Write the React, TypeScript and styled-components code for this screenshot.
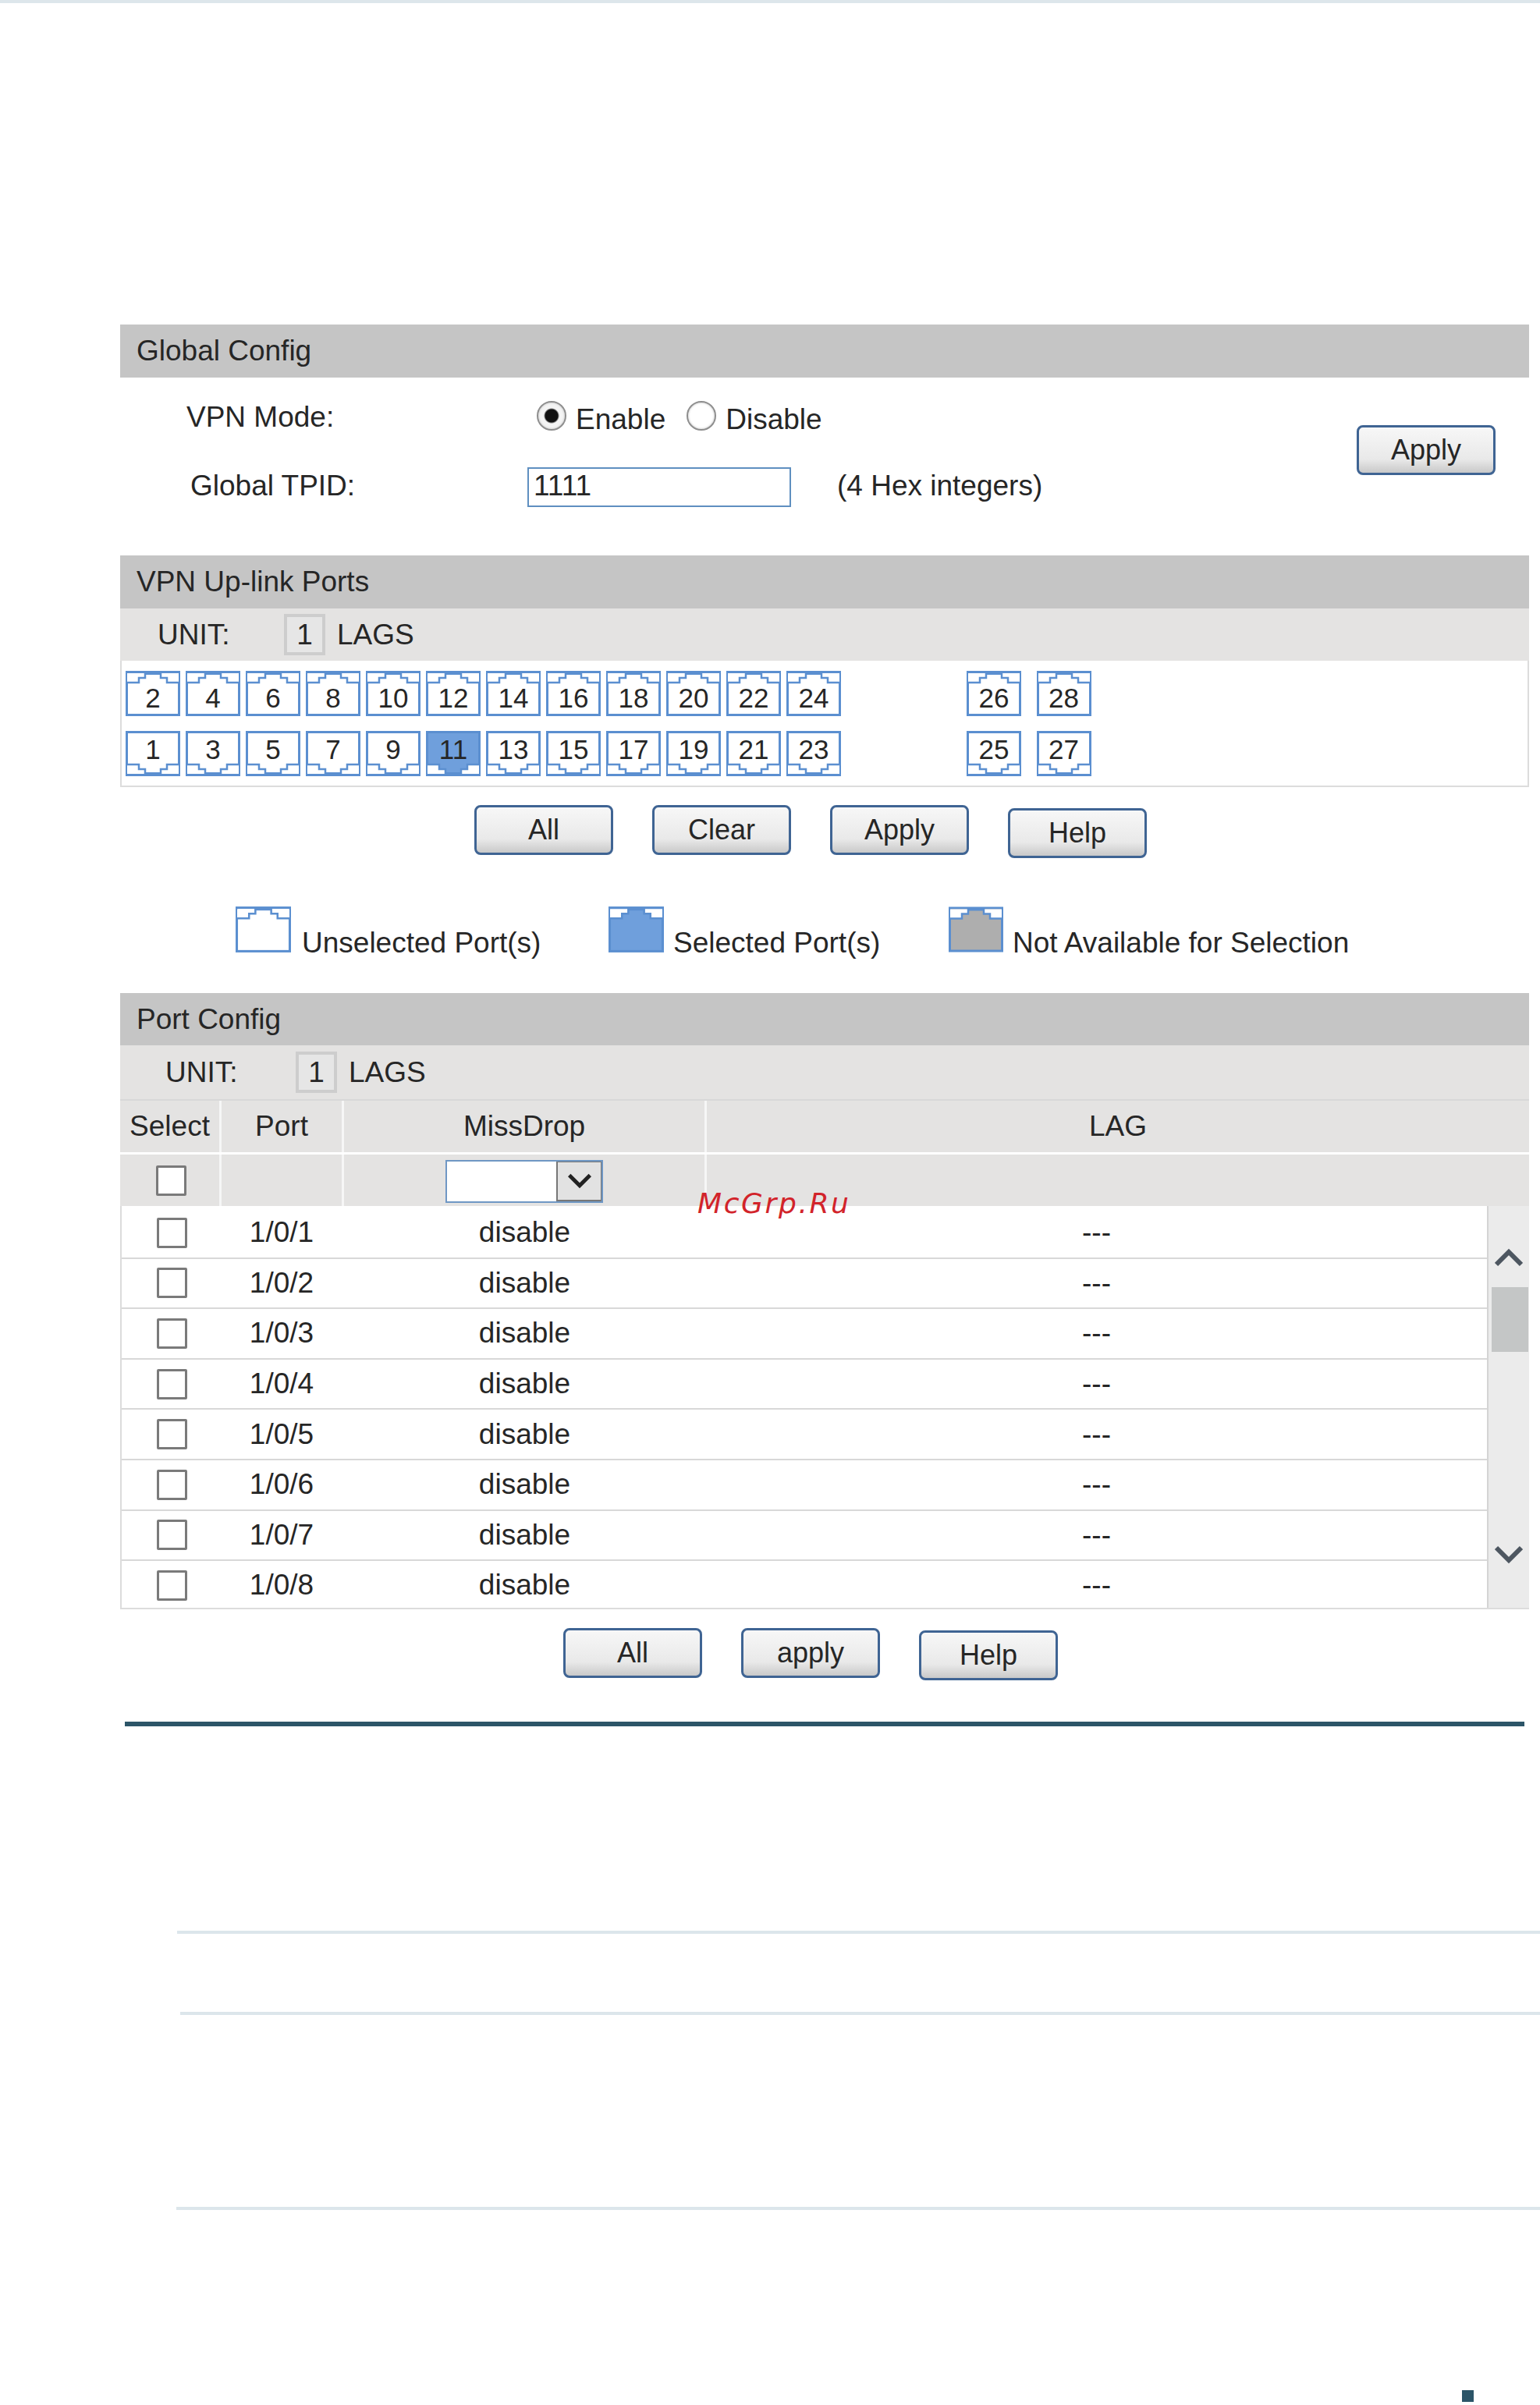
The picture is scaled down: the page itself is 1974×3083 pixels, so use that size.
import React from "react";
import styled, { createGlobalStyle } from "styled-components";

const FONT = `"Liberation Sans", Arial, sans-serif`;

const GlobalStyle = createGlobalStyle`
  html, body {
    margin: 0;
    padding: 0;
    background: #fff;
  }
  * {
    box-sizing: border-box;
  }
`;

const Page = styled("div")`
  position: relative;
  width: 1974px;
  height: 3083px;
  overflow: hidden;
  display: flex;
  flex-direction: column;
  padding-left: 154px;
  background: #fff;
  color: #262626;
  font-family: ${FONT};
  font-size: 37px;
  & > * {
    flex-shrink: 0;
  }
  &::before {
    content: "";
    display: block;
    height: 4px;
    margin-left: -154px;
    margin-bottom: 412px;
    background: #dde6eb;
  }
`;

const Watermark = styled("div")`
  position: absolute;
  left: 894px;
  top: 1521px;
  color: #d2232a;
  font-family: "DejaVu Sans", sans-serif;
  font-style: italic;
  font-size: 36px;
  letter-spacing: 2.6px;
  line-height: 44px;
`;

const Panel = styled("section")`
  width: 1806px;
`;

const TitleBar = styled("div")`
  height: ${(p: { $h?: number }) => p.$h ?? 68}px;
  padding-left: 21px;
  display: flex;
  align-items: center;
  background: #c5c5c5;
`;

const GlobalBody = styled("div")`
  height: 228px;
  display: flex;
  justify-content: space-between;
  align-items: flex-start;
  padding: 20px 43px 0 0;
`;

const FormRows = styled("div")`
  display: flex;
  flex-direction: column;
`;

const FormRow = styled("div")<{ $h: number; $mt?: number }>`
  height: ${(p) => p.$h}px;
  margin-top: ${(p) => p.$mt ?? 0}px;
  display: grid;
  grid-template-columns: 522px auto auto;
  align-items: center;
`;

const FormLabel = styled("span")<{ $left: number; $lift?: number }>`
  padding-left: ${(p) => p.$left}px;
  padding-bottom: ${(p) => p.$lift ?? 0}px;
`;

const RadioGroup = styled("div")`
  display: flex;
  align-items: center;
  padding-left: 12px;
`;

const Radio = styled("input")`
  appearance: none;
  width: 38px;
  height: 38px;
  margin: -4px 12px 0 0;
  border: 2px solid #8e8e8e;
  border-radius: 50%;
  background: #fff;
  box-shadow: inset 0 0 3px #bbb;
  &:checked {
    background: radial-gradient(circle, #111 0 8px, #f4f4f4 10px);
  }
`;

const RadioLabel = styled("span")<{ $mr?: number }>`
  margin-right: ${(p) => p.$mr ?? 0}px;
  padding-top: 6px;
`;

const TextInput = styled("input")`
  width: 338px;
  height: 51px;
  padding: 0 6px 3px;
  border: 2px solid #5f8fc0;
  background: #fff;
  color: #262626;
  font-family: ${FONT};
  font-size: 37px;
  outline: none;
`;

const Hint = styled("span")`
  margin-left: 59px;
  padding-bottom: 3px;
`;

const Button = styled("button")<{ $drop?: number }>`
  width: 178px;
  height: 64px;
  margin-top: ${(p) => p.$drop ?? 0}px;
  padding: 0;
  border: 3px solid #3f6493;
  border-radius: 8px;
  background: linear-gradient(#f7f7f7 0%, #e9e9e9 70%, #c9c9c9 100%);
  color: #262626;
  font-family: ${FONT};
  font-size: 36px;
`;

const TopApply = styled(Button)`
  margin-top: 41px;
`;

const UnitRow = styled("div")<{ $left: number; $h: number; $gap: number }>`
  height: ${(p) => p.$h}px;
  padding-left: ${(p) => p.$left}px;
  display: flex;
  align-items: center;
  background: #e4e3e2;
  & > span:first-child {
    width: ${(p) => p.$gap}px;
  }
`;

const UnitBox = styled("span")`
  width: 53px;
  height: 53px;
  margin-right: 15px;
  display: flex;
  align-items: center;
  justify-content: center;
  background: #e6e6e6;
  box-shadow: inset 0 0 0 4px #cdcdcd;
`;

const PortsArea = styled("div")`
  height: 162px;
  padding: 13px 0 0 5px;
  display: flex;
  flex-direction: column;
  gap: 19px;
  border: solid #dcdcdc;
  border-width: 0 2px 2px 2px;
`;

const PortRow = styled("div")`
  display: flex;
  gap: 7px;
`;

const ExtraPorts = styled("div")`
  display: flex;
  gap: 19.5px;
  margin-left: 154px;
`;

const PortCell = styled("div")`
  width: 70px;
  height: 58px;
  display: grid;
  font-size: 35px;
  & > * {
    grid-area: 1 / 1;
  }
`;

const PortNumber = styled("span")<{ $top: boolean }>`
  justify-self: center;
  align-self: center;
  line-height: 1;
  margin-top: ${(p) => (p.$top ? 10 : -12)}px;
`;

const ButtonRow = styled("div")<{ $left: number; $mt: number }>`
  display: flex;
  align-items: flex-start;
  gap: 50px;
  padding-left: ${(p) => p.$left}px;
  margin-top: ${(p) => p.$mt}px;
`;

const Legend = styled("div")`
  height: 111px;
  margin-top: 62px;
  padding-left: 148px;
  display: grid;
  grid-template-columns: 478px 436px 1fr;
`;

const LegendItem = styled("div")<{ $gap: number }>`
  display: flex;
  align-items: flex-start;
  gap: ${(p) => p.$gap}px;
  & > span {
    margin-top: 26px;
    line-height: 42px;
  }
`;

const TableHead = styled("div")<{ $h: number; $line?: boolean }>`
  height: ${(p) => p.$h}px;
  display: grid;
  grid-template-columns: 127px 157px 465px 1fr;
  background: #e4e3e2;
  border-top: ${(p) => (p.$line ? "3px solid #fff" : "2px solid #d8d8d8")};
`;

const HeadCell = styled("div")<{ $divider?: boolean }>`
  display: flex;
  align-items: center;
  justify-content: center;
  border-left: ${(p) => (p.$divider ? "3px solid #f6f6f6" : "none")};
`;

const TableBody = styled("div")`
  display: flex;
  height: 517px;
  border: solid #dcdcdc;
  border-width: 0 0 2px 2px;
`;

const Rows = styled("div")`
  flex: 1;
  padding-top: 3px;
`;

const Row = styled("div")`
  height: 64.6px;
  display: grid;
  grid-template-columns: 126px 158px 465px 1fr;
  border-bottom: 2px solid #d8d8d8;
  &:last-child {
    height: 62px;
    border-bottom: none;
  }
`;

const Cell = styled("div")`
  display: flex;
  align-items: center;
  justify-content: center;
`;

const Check = styled("input")`
  appearance: none;
  width: 39px;
  height: 39px;
  margin: 0 0 0 3px;
  border: 3px solid #7a7a7a;
  border-radius: 2px;
  background: #fff;
`;

const SelectBox = styled("div")`
  width: 202px;
  height: 55px;
  margin-top: 2px;
  display: flex;
  justify-content: flex-end;
  border: 2px solid #6f97c4;
  background: #fff;
`;

const SelectArrow = styled("div")`
  width: 58px;
  display: flex;
  align-items: center;
  justify-content: center;
  background: #e2e2e2;
  border: 1px solid #777;
  border-width: 1px 1px 2px 2px;
`;

const Scrollbar = styled("div")`
  width: 54px;
  flex-shrink: 0;
  display: flex;
  flex-direction: column;
  align-items: center;
  padding-top: 53px;
  background: #ebebeb;
  border-left: 2px solid #d4d4d4;
`;

const ScrollThumb = styled("div")`
  width: 47px;
  height: 83px;
  margin: 25px 0 247px 3px;
  background: #c4c6c6;
`;

const DarkLine = styled("div")`
  width: 1794px;
  height: 6px;
  margin: 53px 0 0 6px;
  background: #2c5568;
`;

const Rule = styled("div")<{ $left: number; $mt: number }>`
  height: 4px;
  margin-top: ${(p) => p.$mt}px;
  margin-left: ${(p) => p.$left}px;
  background: #dce6eb;
`;

const PageMark = styled("div")`
  width: 15px;
  height: 15px;
  margin: 231px 0 0 1720px;
  background: #2c5568;
`;

const BLUE = "#5b8fd0";

function PortShape({
  fill = "#fff",
  w = 70,
  h = 58,
  flip = false,
}: {
  fill?: string;
  w?: number;
  h?: number;
  flip?: boolean;
}) {
  // the jack: outer box, stepped line at the top, plug tab between the steps
  const notch = "M2 15H17V9H25V3H2Z M68 15H53V9H45V3H68Z";
  return (
    <svg width={w} height={h} viewBox="0 0 70 58">
      <g transform={flip ? "matrix(1 0 0 -1 0 58)" : undefined}>
        <rect x="1.5" y="1.5" width="67" height="55" fill={fill} stroke={BLUE} strokeWidth="3" />
        <path d={notch} fill="#fff" />
        <path
          d="M2 15H17V9H25V3H45V9H53V15H68"
          fill="none"
          stroke={BLUE}
          strokeWidth="2.5"
        />
        <rect x="25" y="2" width="20" height="3" fill={BLUE} />
      </g>
    </svg>
  );
}

function Port({ n }: { n: number }) {
  const top = n % 2 === 0;
  return (
    <PortCell>
      <PortShape flip={!top} fill={n === 11 ? "#6f9fdc" : "#fff"} />
      <PortNumber $top={top}>{n}</PortNumber>
    </PortCell>
  );
}

function Chevron({
  up = false,
  w = 36,
  h = 26,
  color = "#4d5660",
}: {
  up?: boolean;
  w?: number;
  h?: number;
  color?: string;
}) {
  return (
    <svg width={w} height={h} viewBox="0 0 36 26">
      <path
        d={up ? "M2 22L18 6L34 22" : "M2 4L18 20L34 4"}
        fill="none"
        stroke={color}
        strokeWidth={6}
      />
    </svg>
  );
}

const evenPorts = [2, 4, 6, 8, 10, 12, 14, 16, 18, 20, 22, 24];
const oddPorts = [1, 3, 5, 7, 9, 11, 13, 15, 17, 19, 21, 23];
const portRows = ["1/0/1", "1/0/2", "1/0/3", "1/0/4", "1/0/5", "1/0/6", "1/0/7", "1/0/8"];

export default function App() {
  return (
    <Page>
      <GlobalStyle />

      <Panel>
        <TitleBar>Global Config</TitleBar>
        <GlobalBody>
          <FormRows>
            <FormRow $h={62}>
              <FormLabel $left={85}>VPN Mode:</FormLabel>
              <RadioGroup>
                <Radio type="radio" name="vpn" defaultChecked />
                <RadioLabel $mr={27}>Enable</RadioLabel>
                <Radio type="radio" name="vpn" />
                <RadioLabel>Disable</RadioLabel>
              </RadioGroup>
            </FormRow>
            <FormRow $h={51} $mt={33}>
              <FormLabel $left={90} $lift={3}>Global TPID:</FormLabel>
              <TextInput defaultValue="1111" />
              <Hint>(4 Hex integers)</Hint>
            </FormRow>
          </FormRows>
          <TopApply>Apply</TopApply>
        </GlobalBody>
      </Panel>

      <Panel>
        <TitleBar>VPN Up-link Ports</TitleBar>
        <UnitRow $left={48} $h={67} $gap={162}>
          <span>UNIT:</span>
          <UnitBox>1</UnitBox>
          <span>LAGS</span>
        </UnitRow>
        <PortsArea>
          <PortRow>
            {evenPorts.map((n) => (
              <Port key={n} n={n} />
            ))}
            <ExtraPorts>
              <Port n={26} />
              <Port n={28} />
            </ExtraPorts>
          </PortRow>
          <PortRow>
            {oddPorts.map((n) => (
              <Port key={n} n={n} />
            ))}
            <ExtraPorts>
              <Port n={25} />
              <Port n={27} />
            </ExtraPorts>
          </PortRow>
        </PortsArea>
        <ButtonRow $left={454} $mt={23}>
          <Button>All</Button>
          <Button>Clear</Button>
          <Button>Apply</Button>
          <Button $drop={4}>Help</Button>
        </ButtonRow>
      </Panel>

      <Legend>
        <LegendItem $gap={14}>
          <PortShape w={71} h={59} />
          <span>Unselected Port(s)</span>
        </LegendItem>
        <LegendItem $gap={12}>
          <PortShape w={71} h={59} fill="#6f9fdc" />
          <span>Selected Port(s)</span>
        </LegendItem>
        <LegendItem $gap={12}>
          <PortShape w={70} h={59} fill="#aeaeae" />
          <span>Not Available for Selection</span>
        </LegendItem>
      </Legend>

      <Panel>
        <TitleBar $h={67}>Port Config</TitleBar>
        <UnitRow $left={58} $h={69} $gap={167}>
          <span>UNIT:</span>
          <UnitBox>1</UnitBox>
          <span>LAGS</span>
        </UnitRow>
        <TableHead $h={68}>
          <HeadCell>Select</HeadCell>
          <HeadCell $divider>Port</HeadCell>
          <HeadCell $divider>MissDrop</HeadCell>
          <HeadCell $divider>LAG</HeadCell>
        </TableHead>
        <TableHead $h={69} $line>
          <HeadCell>
            <Check type="checkbox" />
          </HeadCell>
          <HeadCell $divider />
          <HeadCell $divider>
            <SelectBox>
              <SelectArrow>
                <Chevron w={30} h={22} color="#222" />
              </SelectArrow>
            </SelectBox>
          </HeadCell>
          <HeadCell $divider />
        </TableHead>
        <TableBody>
          <Rows>
            {portRows.map((port) => (
              <Row key={port}>
                <Cell>
                  <Check type="checkbox" />
                </Cell>
                <Cell>{port}</Cell>
                <Cell>disable</Cell>
                <Cell>---</Cell>
              </Row>
            ))}
          </Rows>
          <Scrollbar>
            <Chevron up />
            <ScrollThumb />
            <Chevron />
          </Scrollbar>
        </TableBody>
        <ButtonRow $left={568} $mt={24}>
          <Button>All</Button>
          <Button>apply</Button>
          <Button $drop={3}>Help</Button>
        </ButtonRow>
      </Panel>

      <DarkLine />
      <Rule $left={73} $mt={262} />
      <Rule $left={77} $mt={100} />
      <Rule $left={72} $mt={246} />
      <PageMark />

      <Watermark>McGrp.Ru</Watermark>
    </Page>
  );
}
